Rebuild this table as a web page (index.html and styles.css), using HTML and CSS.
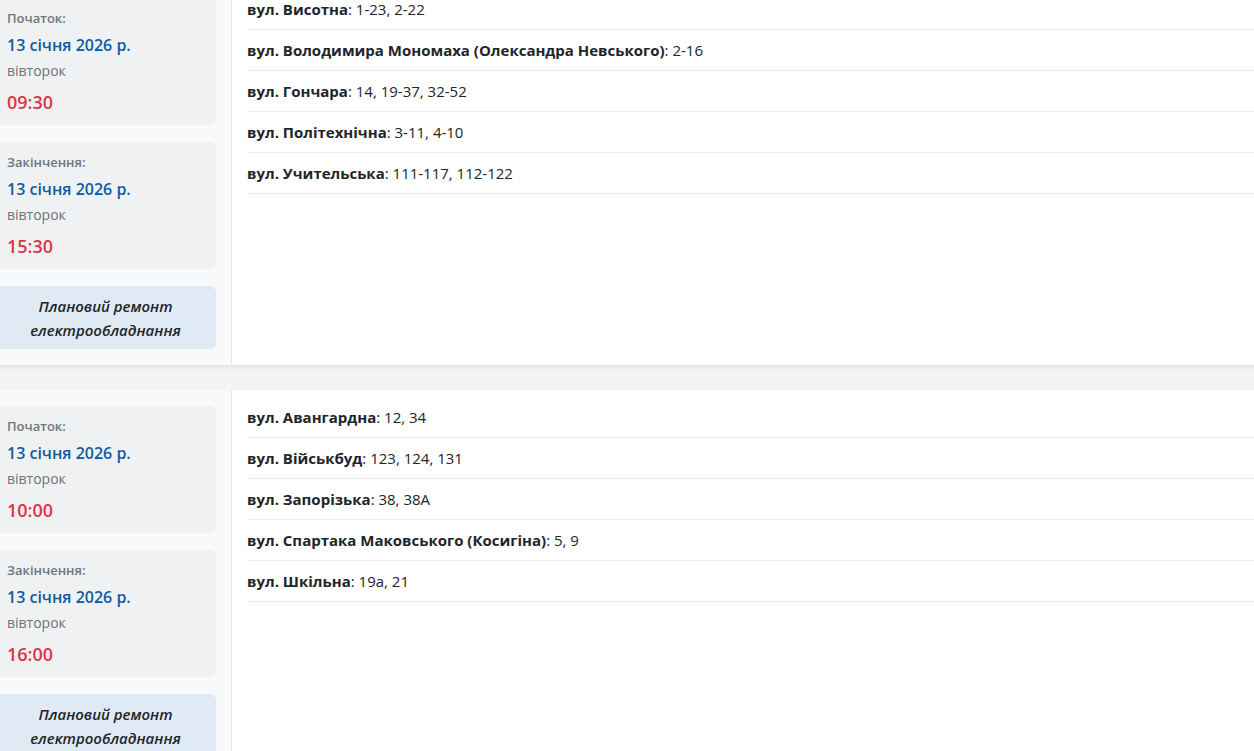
FILE: index.html
```html
<!DOCTYPE html>
<html lang="uk">
<head>
  <meta charset="UTF-8">
  <meta name="viewport" content="width=device-width, initial-scale=1.0">
  <title>Планові відключення</title>
  <link rel="stylesheet" href="styles.css">
</head>
<body>
  <div class="outages">
    <!-- відключення 1 -->
    <div class="outage-card first">
      <div class="outage-info">
        <div class="time-box">
          <div class="time-label">Початок:</div>
          <div class="time-date">13 січня 2026 р.</div>
          <div class="time-day">вівторок</div>
          <div class="time-hour">09:30</div>
        </div>
        <div class="time-box">
          <div class="time-label">Закінчення:</div>
          <div class="time-date">13 січня 2026 р.</div>
          <div class="time-day">вівторок</div>
          <div class="time-hour">15:30</div>
        </div>
        <div class="reason-box">Плановий ремонт електрообладнання</div>
      </div>
      <ul class="street-list">
        <li><b>вул. Висотна</b>: 1-23, 2-22</li>
        <li><b>вул. Володимира Мономаха (Олександра Невського)</b>: 2-16</li>
        <li><b>вул. Гончара</b>: 14, 19-37, 32-52</li>
        <li><b>вул. Політехнічна</b>: 3-11, 4-10</li>
        <li><b>вул. Учительська</b>: 111-117, 112-122</li>
      </ul>
    </div>

    <!-- відключення 2 -->
    <div class="outage-card">
      <div class="outage-info">
        <div class="time-box">
          <div class="time-label">Початок:</div>
          <div class="time-date">13 січня 2026 р.</div>
          <div class="time-day">вівторок</div>
          <div class="time-hour">10:00</div>
        </div>
        <div class="time-box">
          <div class="time-label">Закінчення:</div>
          <div class="time-date">13 січня 2026 р.</div>
          <div class="time-day">вівторок</div>
          <div class="time-hour">16:00</div>
        </div>
        <div class="reason-box">Плановий ремонт електрообладнання</div>
      </div>
      <ul class="street-list">
        <li><b>вул. Авангардна</b>: 12, 34</li>
        <li><b>вул. Військбуд</b>: 123, 124, 131</li>
        <li><b>вул. Запорізька</b>: 38, 38А</li>
        <li><b>вул. Спартака Маковського (Косигіна)</b>: 5, 9</li>
        <li><b>вул. Шкільна</b>: 19а, 21</li>
      </ul>
    </div>
  </div>
</body>
</html>
```

FILE: styles.css
```css
body {
  margin: 0;
  background-color: #f4f4f4;
  font-family: "Open Sans", "Noto Sans", Arial, sans-serif;
  color: #212529;
  overflow: hidden;
}
.outages {
  margin: 0 -40px 0 -21px;
}
.outage-card {
  display: flex;
  background-color: #fff;
  box-shadow: 0 2px 4px rgba(0, 0, 0, 0.08);
  margin-bottom: 25px;
}
.outage-card.first {
  margin-top: -18px;
}
.outage-info {
  width: 221px;
  flex-shrink: 0;
  padding: 16px 15px 16px 16px;
  background-color: #f8f9fa;
  border-right: 1px solid #e4e6e9;
  display: flex;
  flex-direction: column;
  gap: 17px;
}
.time-box {
  background-color: #f0f1f3;
  border-radius: 6px;
  padding: 10px 12px 9px;
}
.time-label {
  font-size: 13px;
  line-height: 20px;
  font-weight: 600;
  color: #6c757d;
}
.time-date {
  margin-top: 5px;
  font-size: 16px;
  line-height: 24px;
  font-weight: 600;
  color: #0d5aa7;
}
.time-day {
  margin-top: 4px;
  font-size: 14px;
  line-height: 20px;
  color: #6c757d;
}
.time-hour {
  margin-top: 8px;
  font-size: 18px;
  line-height: 27px;
  font-weight: 600;
  color: #dc3545;
}
.reason-box {
  background-color: #e0eaf4;
  border-radius: 6px;
  padding: 8px 12px 7px;
  font-size: 15px;
  line-height: 24px;
  font-style: italic;
  font-weight: 600;
  text-align: center;
}
.street-list {
  flex: 1;
  list-style: none;
  margin: 0;
  padding: 7px 0 0 15px;
}
.street-list li {
  padding: 10px 0;
  font-size: 15px;
  line-height: 20px;
  border-bottom: 1px solid #e9ecef;
}
.street-list b {
  font-weight: 700;
}
```
